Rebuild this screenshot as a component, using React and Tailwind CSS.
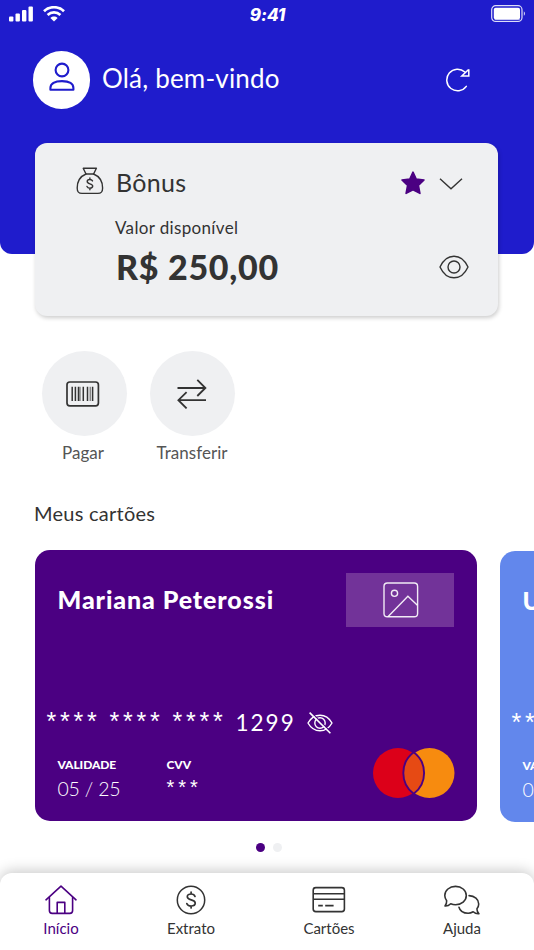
import React from "react";

const SignalIcon = () => (
  <svg width="24" height="16" viewBox="0 0 24 16" fill="white">
    <rect x="0" y="10.5" width="4.4" height="5" rx="1" />
    <rect x="6.5" y="7.5" width="4.4" height="8" rx="1" />
    <rect x="13" y="4" width="4.4" height="11.5" rx="1" />
    <rect x="19.5" y="0.5" width="4.4" height="15" rx="1" />
  </svg>
);

const WifiIcon = () => (
  <svg width="22" height="16" viewBox="0 0 22 16" fill="none" stroke="white" strokeWidth="2.7">
    <path d="M1 5.2C6.5 -0.1 15.5 -0.1 21 5.2" />
    <path d="M4.6 9C8.3 5.5 13.7 5.5 17.4 9" />
    <path d="M7.4 12C9.5 10.1 12.5 10.1 14.6 12L11 15.6Z" fill="white" stroke="none" />
  </svg>
);

const BatteryIcon = () => (
  <svg width="35" height="18" viewBox="0 0 35 18" fill="none">
    <rect x="0.7" y="0.7" width="30.3" height="15.8" rx="4" stroke="white" strokeOpacity="0.85" strokeWidth="1.2" />
    <rect x="2.8" y="2.8" width="26.2" height="11.6" rx="1.8" fill="white" />
    <path d="M3 13.4H28.8V15.2H4Z" fill="white" fillOpacity="0.55" />
    <path d="M32.8 6.2C34.4 7 34.4 10 32.8 10.8Z" fill="white" fillOpacity="0.8" />
  </svg>
);

const UserIcon = () => (
  <svg width="28" height="32" viewBox="0 0 28 32" fill="none" stroke="#1f1ccc" strokeWidth="2.1">
    <circle cx="14" cy="8" r="6.4" />
    <path d="M2.4 27.8V26C2.4 21.6 6.5 19.1 14 19.1S25.4 21.6 25.4 26V27.8Z" strokeLinejoin="round" />
  </svg>
);

const RefreshIcon = () => (
  <svg width="24" height="24" viewBox="0 0 24 24" fill="none" stroke="white" strokeWidth="1.5">
    <path d="M20.3 18.4A10.8 10.8 0 1 1 18.8 4" strokeLinecap="round" />
    <path d="M22.8 1.2V8H15.8L22.6 1.5" />
  </svg>
);

const MoneyBagIcon = () => (
  <svg width="28" height="28" viewBox="0 0 28 28" fill="none" stroke="#333" strokeWidth="1.4" strokeLinejoin="round" strokeLinecap="round">
    <path d="M7.2 1.3H20.4L17.6 7H10Z" />
    <path d="M10 7C4 9.5 1.2 15 1.2 21C1.2 25 2.4 26.4 6 26.4H21.8C25.4 26.4 26.6 25 26.6 21C26.6 15 23.6 9.5 17.6 7" />
    <path d="M16.5 13.9C16 12.9 15.2 12.5 13.8 12.5C12.2 12.5 11.2 13.3 11.2 14.6C11.2 17.6 16.7 16 16.7 19.1C16.7 20.4 15.6 21.2 13.9 21.2C12.4 21.2 11.4 20.6 11 19.5M13.9 11V12.5M13.9 21.2V22.7" />
  </svg>
);

const StarIcon = () => (
  <svg width="24" height="24" viewBox="0 0 24 24" fill="#4b0082" stroke="#4b0082" strokeWidth="1.6" strokeLinejoin="round">
    <path d="M12 1.2L15.2 8.1L23 9L17.4 14.3L18.9 22.4L12 18.8L5.1 22.4L6.6 14.3L1 9L8.8 8.1Z" />
  </svg>
);

const ChevronIcon = () => (
  <svg width="24" height="12" viewBox="0 0 24 12" fill="none" stroke="#333" strokeWidth="1.4">
    <path d="M1 0.8L12 10.8L23 0.8" />
  </svg>
);

const EyeIcon = () => (
  <svg width="30" height="24" viewBox="0 0 30 24" fill="none" stroke="#333" strokeWidth="1.4">
    <path d="M1 12C4.2 5 9 1.2 15 1.2S25.8 5 29 12C25.8 19 21 22.8 15 22.8S4.2 19 1 12Z" strokeLinejoin="round" />
    <circle cx="15" cy="12" r="6" />
  </svg>
);

const EyeOffIcon = () => (
  <svg width="26" height="22" viewBox="0 0 26 22" fill="none" stroke="white" strokeWidth="1.4">
    <path d="M1 11C3.8 6 8 3.2 13 3.2S22.2 6 25 11C22.2 16 18 18.8 13 18.8S3.8 16 1 11Z" strokeLinejoin="round" />
    <circle cx="13" cy="11" r="5.2" />
    <path d="M4.4 0.6L24.6 20.6" stroke="#4b0082" strokeWidth="1.2" />
    <path d="M2.6 0.6L23.4 21.2" strokeWidth="1.6" />
  </svg>
);

const BarcodeIcon = () => (
  <svg width="34" height="26" viewBox="0 0 34 26" fill="none" stroke="#333">
    <rect x="1" y="1" width="31.4" height="23.8" rx="2.8" strokeWidth="1.7" />
    <path d="M6.2 5.8V20M9.4 5.8V20M12.5 5.8V20M17.3 5.8V20M21.5 5.8V20M26.6 5.8V20" strokeWidth="1.5" />
    <path d="M14 5.8V20M24.2 5.8V20" strokeWidth="0.8" />
  </svg>
);

const TransferIcon = () => (
  <svg width="30" height="30" viewBox="0 0 30 30" fill="none" stroke="#333" strokeWidth="1.8">
    <path d="M0.5 9H28.5M20.3 0.9L28.4 9L20.3 17" />
    <path d="M29 21.2H1.2M9.6 13.2L1.4 21.2L9.6 29.4" />
  </svg>
);

const PictureIcon = () => (
  <svg width="36" height="36" viewBox="0 0 36 36" fill="none" stroke="white" strokeWidth="1.4" strokeOpacity="0.9">
    <rect x="1" y="1" width="33.6" height="33.8" rx="3.4" />
    <circle cx="11.5" cy="11.3" r="3.1" />
    <path d="M5.2 34.4L24.9 14.2L34.4 23.2" />
  </svg>
);

const MastercardLogo = () => (
  <svg width="82" height="50" viewBox="0 0 82 50">
    <circle cx="25" cy="25" r="25" fill="#dc0019" />
    <circle cx="56.5" cy="25" r="25" fill="#f78b0f" />
    <path d="M40.7 4.2A26 26 0 0 1 40.7 45.8A26 26 0 0 1 40.7 4.2Z" fill="#e64a14" stroke="#4b0082" strokeWidth="1.9" />
    <path d="M36.5 0H45.5L40.8 5.2ZM36.5 50H45.5L40.8 44.8Z" fill="#4b0082" />
  </svg>
);

const HomeIcon = () => (
  <svg width="32" height="30" viewBox="0 0 32 30" fill="none" stroke="#4b0082" strokeWidth="1.6" strokeLinejoin="round" strokeLinecap="round">
    <path d="M1 14.8L16 1.2L31 14.8" />
    <path d="M4.4 12.6V25.6C4.4 27.6 5.2 28.4 7.2 28.4H24.8C26.8 28.4 27.6 27.6 27.6 25.6V12.6" />
    <path d="M12.2 28.2V17.4H19.8V28.2" />
  </svg>
);

const CoinIcon = () => (
  <svg width="30" height="30" viewBox="0 0 30 30" fill="none" stroke="#333" strokeWidth="1.5" strokeLinecap="round">
    <circle cx="15" cy="15" r="13.7" />
    <path d="M19 11.4C18.5 9.8 17.2 9 15.1 9C12.8 9 11.3 10 11.3 11.8C11.3 16 19.2 13.6 19.2 18C19.2 19.9 17.5 21 15.1 21C12.8 21 11.3 20.1 10.8 18.5M15.1 7V9M15.1 21V23" strokeWidth="1.7" />
  </svg>
);

const CardIcon = () => (
  <svg width="34" height="30" viewBox="0 0 34 30" fill="none" stroke="#333" strokeWidth="1.6">
    <rect x="1.2" y="2.6" width="31.2" height="24" rx="2.6" />
    <path d="M1.2 8.8H32.4M1.2 14.2H32.4" />
    <path d="M6.2 20.6H10.8M13.2 20.6H21.6" />
  </svg>
);

const ChatIcon = () => (
  <svg width="36" height="30" viewBox="1 0 36.5 30" fill="none" stroke="#333" strokeWidth="1.6" strokeLinejoin="round" strokeLinecap="round">
    <path d="M3.7 15.7C2.4 14 1.8 12.3 1.8 10.4C1.8 5.2 6.6 1.2 12.7 1.2S23.6 5.2 23.6 10.5S18.8 19.8 12.7 19.8C10.9 19.8 9.2 19.4 7.8 18.8C6 20.6 4.2 21.3 2 21.1C3.2 19.6 3.8 17.8 3.7 15.7Z" />
    <path d="M26.4 10.6C32 10.8 36.2 14.2 36.2 19C36.2 20.9 35.6 22.4 34.4 23.8C34.3 25.8 35.1 27.5 36.4 28.9C34.3 29.1 32.2 28.4 30.6 26.9C29 27.8 27.4 28.4 25.5 28.4C20.7 28.4 17.2 26.1 16.2 22.3" />
  </svg>
);

const actions = [
  { label: "Pagar", Icon: BarcodeIcon, offset: "pr-[2px]" },
  { label: "Transferir", Icon: TransferIcon, offset: "pr-0" },
];

const tabs = [
  { label: "Início", Icon: HomeIcon, active: true, width: "w-[122px]" },
  { label: "Extrato", Icon: CoinIcon, width: "w-[138px]" },
  { label: "Cartões", Icon: CardIcon, width: "w-[138px]" },
  { label: "Ajuda", Icon: ChatIcon, width: "w-[128px]" },
];

const CreditCard = ({ name, digits, expiry, className, logos }) => (
  <div className={`w-[442px] h-[271px] shrink-0 rounded-[15px] text-white flex flex-col ${className}`}>
    <div className="flex justify-between h-[77px] pl-[23px] pr-[23px] pt-[23px]">
      <h3 className="text-[25px] leading-[53px] font-black whitespace-nowrap tracking-[0.9px]">{name}</h3>
      {logos && (
        <div className="w-[108px] h-[54px] bg-[#723399] flex items-center justify-center pl-[2px]">
          <PictureIcon />
        </div>
      )}
    </div>

    <div className="flex items-center mt-[79px] ml-[12px] h-[32px] text-[23px] leading-[32px]">
      {[0, 1, 2].map((group) => (
        <span key={group} className="w-[63px] pb-[3px] font-['Liberation_Sans',sans-serif] text-[25px] tracking-[3.8px]">
          ****
        </span>
      ))}
      <span className="w-[71px] tracking-[2px] pt-px text-[22.5px]">{digits}</span>
      {logos && (
        <div className="pt-[2px]">
          <EyeOffIcon />
        </div>
      )}
    </div>

    <div className="flex pl-[23px] mt-[17px]">
      <div className="w-[109px] whitespace-nowrap">
        <p className="text-[12px] leading-[20px] font-black tracking-[-0.1px]">VALIDADE</p>
        <p className="text-[19.5px] leading-[28px] font-light tracking-[-0.2px]">{expiry}</p>
      </div>
      <div className="w-[206px]">
        <p className="text-[12px] leading-[20px] font-black tracking-[-0.1px]">CVV</p>
        <p className="font-['Liberation_Sans',sans-serif] text-[20px] leading-[24px] tracking-[4px]">***</p>
      </div>
      {logos && (
        <div className="-mt-[7px]">
          <MastercardLogo />
        </div>
      )}
    </div>
  </div>
);

const App = () => {
  return (
    <div className="w-[534px] h-[950px] overflow-hidden bg-white text-[#333] flex flex-col font-['Lato',sans-serif]">
      <header className="h-[254px] shrink-0 bg-[#1f1ccc] rounded-b-[12px] text-white">
        <div className="h-[29px] grid grid-cols-3 items-center pl-[9px] pr-[8px]">
          <div className="flex items-center gap-[10px] pb-[3px]">
            <SignalIcon />
            <WifiIcon />
          </div>
          <span className="text-center font-['Inter',sans-serif] font-extrabold italic text-[17px] leading-[29px] pt-[1px] tracking-[-0.1px]">
            9:41
          </span>
          <div className="flex justify-end pb-[3px]">
            <BatteryIcon />
          </div>
        </div>
        <div className="flex items-center pl-[33px] pr-[64px] mt-[22px]">
          <div className="w-[57px] h-[58px] rounded-full bg-white flex items-center justify-center pb-1">
            <UserIcon />
          </div>
          <h1 className="ml-3 flex-1 text-[26px] leading-[54px] pb-1 whitespace-nowrap tracking-[0.2px]">Olá, bem-vindo</h1>
          <RefreshIcon />
        </div>
      </header>

      <section className="w-[463px] h-[173px] shrink-0 ml-[35px] -mt-[111px] rounded-[12px] bg-[#eff0f2] shadow-[1px_2px_4px_rgba(0,0,0,0.2)] pl-[41px] pr-[29px] pt-[23px]">
        <div className="flex items-center h-[32px]">
          <div className="pb-[2px]">
            <MoneyBagIcon />
          </div>
          <h2 className="ml-[12px] flex-1 text-[25px] leading-[32px] tracking-[0.3px]">Bônus</h2>
          <div className="pt-[2px]">
            <StarIcon />
          </div>
          <div className="ml-[14px] mr-[6px] pt-[3px]">
            <ChevronIcon />
          </div>
        </div>
        <p className="ml-[39px] mt-[18px] text-[17px] leading-[24px] tracking-[0.35px]">Valor disponível</p>
        <div className="flex items-center justify-between mt-[7px] ml-[40px]">
          <span className="text-[34px] leading-[40px] font-black tracking-[0.7px]">R$ 250,00</span>
          <EyeIcon />
        </div>
      </section>

      <section className="flex shrink-0 mt-[35px] ml-[30px]">
        {actions.map(({ label, Icon, offset }) => (
          <button key={label} className="w-[108px] flex flex-col items-center">
            <span className={`w-[85px] h-[85px] rounded-full bg-[#eff0f2] flex items-center justify-center ${offset}`}>
              <Icon />
            </span>
            <span className={`mt-[5px] text-[17px] leading-[24px] text-[#555] tracking-[0.05px] ${offset}`}>{label}</span>
          </button>
        ))}
      </section>

      <section className="mt-[35px] shrink-0">
        <h2 className="ml-[34px] text-[20px] leading-[26px] tracking-[0.25px]">Meus cartões</h2>
        <div className="flex gap-[23px] ml-[34.5px] mt-[24px]">
          <CreditCard name="Mariana Peterossi" digits="1299" expiry="05 / 25" className="bg-[#4b0082]" logos />
          <CreditCard name="U" digits="" expiry="05 / 25" className="bg-[#6287ec] mt-[1px]" />
        </div>
        <div className="flex justify-center gap-[8px] mt-[21px] pl-[4px]">
          <span className="w-[9px] h-[9px] rounded-full bg-[#4b0082]" />
          <span className="w-[9px] h-[9px] rounded-full bg-[#eff0f2]" />
        </div>
      </section>

      <nav className="flex-1 mt-[21px] flex bg-white rounded-t-[12px] shadow-[0_-2px_14px_rgba(0,0,0,0.22)]">
        {tabs.map(({ label, Icon, active, width }) => (
          <button key={label} className={`${width} shrink-0 flex flex-col items-center pt-[12px] ${active ? "text-[#4b0082]" : ""}`}>
            <Icon />
            <span className="mt-[2px] text-[15px] leading-[22px]">{label}</span>
          </button>
        ))}
      </nav>
    </div>
  );
};

export default App;
